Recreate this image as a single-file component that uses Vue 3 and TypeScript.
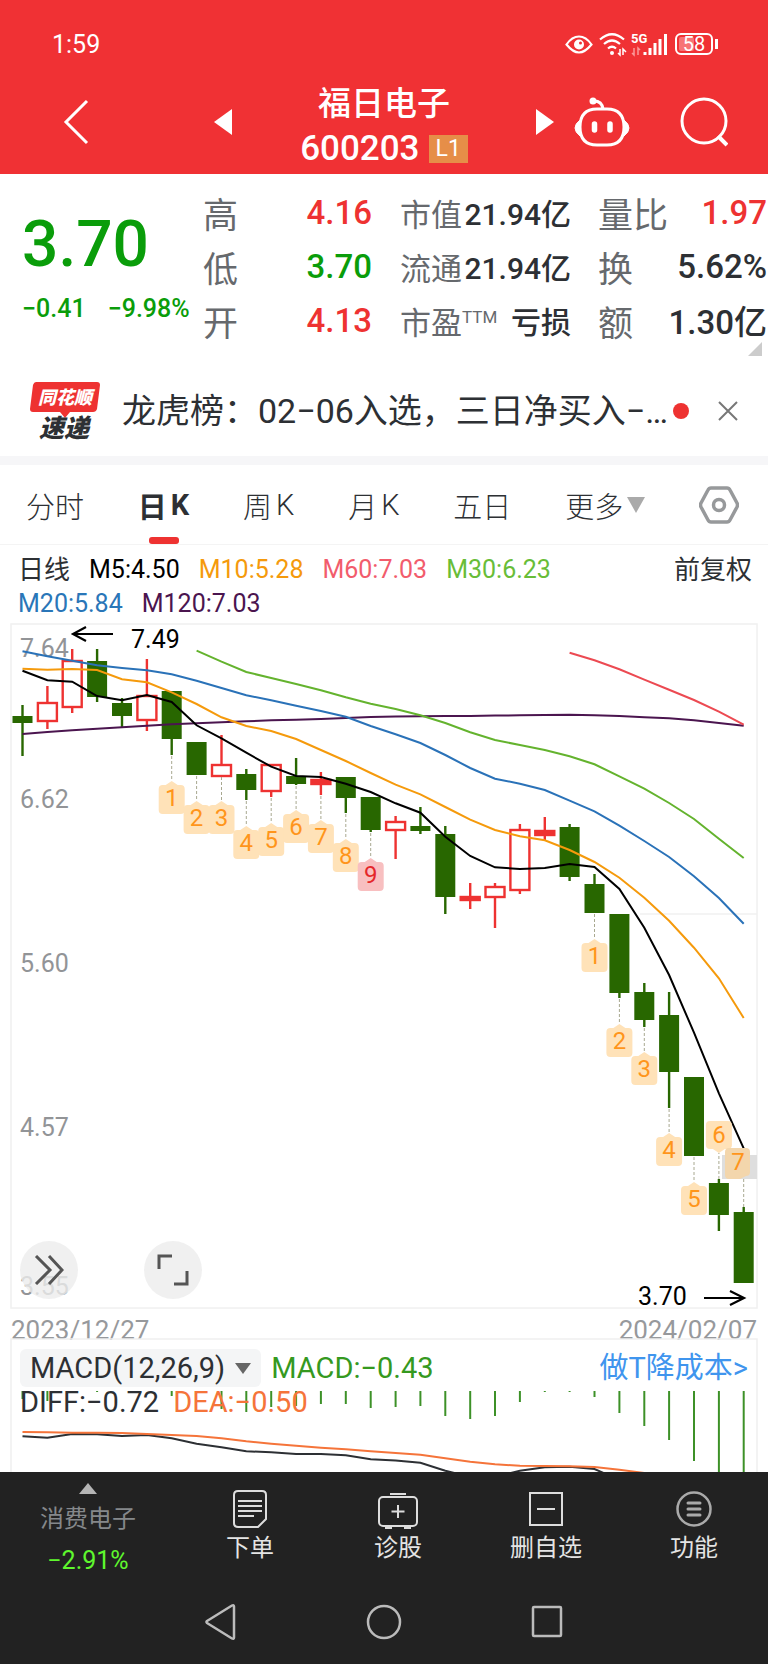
<script setup lang="ts">
interface Candle {
  up: boolean
  high: number
  top: number
  bottom: number
  low: number
}
interface Mark {
  i: number
  n: string
  y: number
}
interface Stat {
  label: string
  sup?: string
  value: string
  tone?: string
}

const STEP = 24.87
const cx = (i: number): number => Math.round((22.5 + STEP * i) * 10) / 10
const line = (values: number[], start = 0): string =>
  values.map((v, k) => `${cx(start + k)},${v}`).join(' ')

const stats: Stat[][] = [
  [
    { label: '高', value: '4.16', tone: 'rise' },
    { label: '低', value: '3.70', tone: 'fall' },
    { label: '开', value: '4.13', tone: 'rise' },
  ],
  [
    { label: '市值', value: '21.94亿' },
    { label: '流通', value: '21.94亿' },
    { label: '市盈', sup: 'TTM', value: '亏损' },
  ],
  [
    { label: '量比', value: '1.97', tone: 'rise' },
    { label: '换', value: '5.62%' },
    { label: '额', value: '1.30亿' },
  ],
]

const tabs: string[][] = [['分时'], ['日', 'K'], ['周', 'K'], ['月', 'K'], ['五日']]

const averages = [
  { text: 'M5:4.50', tone: 'm5' },
  { text: 'M10:5.28', tone: 'm10' },
  { text: 'M60:7.03', tone: 'm60' },
  { text: 'M30:6.23', tone: 'm30' },
  { text: 'M20:5.84', tone: 'm20' },
  { text: 'M120:7.03', tone: 'm120' },
]

const raw: [number, number, number, number, number][] = [
  [0, 85, 96, 103, 136], [1, 66, 82, 101, 109], [1, 29, 40, 87, 93], [0, 29, 41, 77, 82],
  [0, 78, 83, 96, 107], [1, 39, 75, 100, 111], [0, 71, 71, 119, 135], [0, 122, 122, 155, 155],
  [1, 115, 144, 156, 156], [0, 149, 154, 170, 180], [1, 144, 144, 171, 177], [0, 138, 156, 164, 165],
  [1, 152, 159, 164, 175], [0, 157, 157, 178, 193], [0, 177, 177, 210, 212], [1, 196, 201, 210, 239],
  [0, 187, 206, 211, 214], [0, 206, 214, 277, 294], [1, 263, 276, 280, 289], [1, 263, 266, 277, 308],
  [1, 204, 209, 270, 274], [1, 197, 210, 215, 220], [0, 204, 207, 257, 261], [0, 254, 264, 293, 293],
  [0, 294, 294, 373, 378], [0, 363, 372, 400, 407], [0, 372, 395, 452, 488], [0, 457, 457, 536, 536],
  [0, 559, 563, 595, 611], [0, 587, 592, 663, 663],
]
const candles: Candle[] = raw.map(([u, high, top, bottom, low]) => ({ up: u === 1, high, top, bottom, low }))
const isFlat = (c: Candle): boolean => c.bottom - c.top < 6

const lines = [
  { tone: 'm120', points: line([114, 112, 110.3, 108.7, 107.3, 105.7, 104.3, 103.3, 102.3, 101.3, 100.3, 99.7, 99, 98, 97, 96.6, 96.2, 96, 96, 95.5, 95.3, 95.1, 94.7, 95.3, 96, 97.3, 98.3, 100.3, 103, 105.7]) },
  { tone: 'm60', points: line([32.7, 40.3, 49.3, 59.7, 69.7, 80, 91.7, 104.7], 22) },
  { tone: 'm30', points: line([30.7, 41.7, 52, 58, 64, 70.3, 77.3, 83.7, 89, 95.3, 103, 112.3, 120, 125, 130, 136.3, 144.3, 156.3, 168.7, 183, 199, 218.7, 238], 7) },
  { tone: 'm20', points: line([31.3, 36.3, 40.7, 45.3, 48, 50.3, 54.3, 60.7, 68, 75.3, 80.3, 85.7, 91, 96.7, 106, 114.3, 123, 135, 148, 158.7, 163.7, 170, 180.7, 191.3, 205.7, 221, 237, 256.3, 278, 303.7]) },
  { tone: 'm10', points: line([48.7, 49.7, 49, 50, 59.3, 62.3, 72.3, 84, 97.3, 106, 111, 119, 130, 141, 153, 164.7, 174.3, 187, 199.7, 210, 216.3, 220.3, 230, 242, 257.7, 277.7, 300.7, 327.7, 358.3, 398]) },
  { tone: 'm5', points: line([50.7, 60.3, 61.7, 76, 80.3, 75, 82, 105.3, 118.3, 132.7, 146.7, 156, 157, 163.7, 172, 183.3, 192.7, 216.7, 236, 247.3, 249, 248, 244, 247, 269, 307.7, 355, 412.7, 473.3, 528.3]) },
]

const marks: Mark[] = [
  { i: 6, n: '1', y: 161 }, { i: 7, n: '2', y: 181 }, { i: 8, n: '3', y: 181 },
  { i: 9, n: '4', y: 206 }, { i: 10, n: '5', y: 203 }, { i: 11, n: '6', y: 190 },
  { i: 12, n: '7', y: 200 }, { i: 13, n: '8', y: 219 }, { i: 14, n: '9', y: 238 },
  { i: 23, n: '1', y: 319 }, { i: 24, n: '2', y: 404 }, { i: 25, n: '3', y: 432 },
  { i: 26, n: '4', y: 513 }, { i: 27, n: '5', y: 562 },
]

const axis = [
  { v: '7.64', y: 37 }, { v: '6.62', y: 188 }, { v: '5.60', y: 352 },
  { v: '4.57', y: 516 }, { v: '3.55', y: 675 },
]

const bars: number[] = [8, 10, 1, 1, 0, 0, 5, 0, 18, 21, 16, 15, 13, 13, 17, 16, 15, 25, 28, 25, 11, 1, 1, 6, 22, 35, 49, 70, 84, 84]
const diff = line([98.3, 99.7, 96, 96.3, 98, 97, 100.3, 105.7, 109.3, 113.3, 114.3, 116, 116, 117.3, 121.3, 122.6, 124.7, 132.7, 139, 139, 132.7, 129.3, 128.7, 131, 142])
const dea = line([94, 94.3, 94.7, 94.7, 95, 96, 97, 98, 100.3, 103.3, 105.7, 107.7, 109.7, 111.3, 113.3, 115, 116.7, 120.3, 123.7, 126.3, 127.7, 128, 128.3, 129, 131.7, 135, 142])
</script>

<template>
  <div class="app">
    <header class="top">
      <div class="status">
        <span class="clock">1:59</span>
        <svg class="status-icons" width="154" height="26" viewBox="0 0 154 26" fill="none" stroke="#fff" aria-hidden="true">
          <path d="M1.500 13.500Q7 5.500 14 5.500T26.500 13.500Q20 21.500 14 21.500T1.500 13.500Z" stroke-width="2.200" />
          <circle cx="14" cy="13.500" r="5" fill="#fff" stroke="none" />
          <circle cx="15.500" cy="12" r="1.500" fill="#f03134" stroke="none" />
          <path d="M35 8.500Q47 -2 59 8.500M39 13Q47 6 55 13M43 17.500Q47 14 51 17.500" stroke-width="2.200" />
          <circle cx="47" cy="22" r="2" fill="#fff" stroke="none" />
          <path d="M55 18v6l-2-2M58 24v-6l3 3" stroke-width="1.500" />
          <text x="66" y="12" class="net" fill="#fff" stroke="none">5G</text>
          <path d="M69 17v7l-2-2M73 24v-7l2 2" stroke="#fa9a9a" stroke-width="1.500" />
          <path d="M80 24v-3M85 24v-7M90 24v-12M95 24v-16M100.500 24v-21" stroke-width="3" />
          <rect x="111" y="3" width="36" height="20" rx="5" stroke-width="2" />
          <rect x="114" y="6" width="15" height="14" rx="2" fill="#f77476" stroke="none" />
          <text x="129" y="20" text-anchor="middle" class="battery" fill="#fff" stroke="none">58</text>
          <path d="M151.500 8v10" stroke-width="3" />
        </svg>
      </div>
      <div class="titlebar">
        <button class="icon back" aria-label="返回">
          <svg width="26" height="46" viewBox="0 0 26 46" fill="none" stroke="#fff" stroke-width="3"><path d="M24 2L3 23l21 21" /></svg>
        </button>
        <div class="stock">
          <button class="icon" aria-label="上一只">
            <svg width="18" height="26" viewBox="0 0 18 26" fill="#fff"><path d="M18 0v26L0 13z" /></svg>
          </button>
          <div class="names">
            <h1>福日电子</h1>
            <div class="code"><span>600203</span><span class="level">L1</span></div>
          </div>
          <button class="icon" aria-label="下一只">
            <svg width="18" height="26" viewBox="0 0 18 26" fill="#fff"><path d="M0 0v26l18-13z" /></svg>
          </button>
        </div>
        <div class="actions">
          <button class="icon" aria-label="智能助手">
            <svg width="56" height="52" viewBox="0 0 56 52" fill="none" stroke="#fff" stroke-width="3">
              <circle cx="19" cy="5" r="3.500" fill="#fff" stroke="none" />
              <path d="M20 5q8 0 9 8" />
              <path d="M23 13h10q17 0 17 18 0 18-17 18H23Q6 49 6 31 6 13 23 13z" />
              <path d="M6 24q-5 4-5 8t5 8zM50 24q5 4 5 8t-5 8z" fill="#fff" stroke-width="1" />
              <path d="M20.500 28v6M36 28v6" stroke-width="5.500" stroke-linecap="round" />
            </svg>
          </button>
          <button class="icon" aria-label="搜索">
            <svg width="48" height="50" viewBox="0 0 48 50" fill="none" stroke="#fff" stroke-width="3">
              <circle cx="24" cy="24" r="22" /><path d="M38 39l9 9" stroke-width="4" />
            </svg>
          </button>
        </div>
      </div>
    </header>

    <section class="quote">
      <div class="price fall">
        <strong>3.70</strong>
        <p><span>−0.41</span><span>−9.98%</span></p>
      </div>
      <dl v-for="(col, c) in stats" :key="c" :class="'col' + c">
        <div v-for="s in col" :key="s.label">
          <dt>{{ s.label }}<sup v-if="s.sup">{{ s.sup }}</sup></dt>
          <dd :class="s.tone">{{ s.value }}</dd>
        </div>
      </dl>
      <svg class="corner" width="14" height="14" viewBox="0 0 14 14" fill="#ccc" aria-hidden="true"><path d="M14 0v14H0z" /></svg>
    </section>

    <section class="news">
      <svg class="brand" width="70" height="58" viewBox="0 0 70 58">
        <path d="M6 0h61q3 0 3 3l-3 24q-1 3-4 3H40l-5 6-5-6H3q-3 0-3-3L3 3q1-3 3-3z" fill="#ee3231" />
        <text x="35" y="22" font-size="18" fill="#fff">同花顺</text>
        <text x="34" y="55" font-size="25" fill="#2d3034">速递</text>
      </svg>
      <a href="#news">龙虎榜：02−06入选，三日净买入−…</a>
      <i class="dot"></i>
      <button class="icon" aria-label="关闭">
        <svg width="20" height="20" viewBox="0 0 20 20" stroke="#777" stroke-width="2"><path d="M1 1l18 18M19 1L1 19" /></svg>
      </button>
    </section>

    <nav class="tabs">
      <button v-for="t in tabs" :key="t[0]" :class="{ active: t[0] === '日' }"><span v-for="p in t" :key="p">{{ p }}</span></button>
      <button class="more">更多<svg width="18" height="16" viewBox="0 0 18 16" fill="#aaa"><path d="M0 0h18L9 16z" /></svg></button>
      <button aria-label="设置">
        <svg width="40" height="38" viewBox="0 0 40 38" fill="none" stroke="#97999b" stroke-width="3.500" stroke-linejoin="round">
          <path d="M12 2h16q2 0 3 2l7 13q1 2 0 4l-7 13q-1 2-3 2H12q-2 0-3-2L2 21q-1-2 0-4L9 4q1-2 3-2z" /><circle cx="20" cy="19" r="5.500" />
        </svg>
      </button>
    </nav>

    <section class="legend">
      <div class="averages">
        <span class="kind">日线</span>
        <span v-for="a in averages" :key="a.text" :class="a.tone">{{ a.text }}</span>
      </div>
      <button>前复权</button>
    </section>

    <section class="kline">
      <svg class="plot" viewBox="0 0 768 690" role="img" aria-label="日K线图">
        <rect x="11" y="4" width="746" height="684" class="frame" />
        <path d="M640 294h117" class="frame" />
        <text v-for="a in axis" :key="a.v" x="20" :y="a.y" class="axis">{{ a.v }}</text>
        <g v-for="(c, i) in candles" :key="i" :class="[c.up ? 'up' : 'down', { flat: isFlat(c) }]">
          <path :d="`M${cx(i)} ${c.high}V${c.top}M${cx(i)} ${c.bottom}V${c.low}`" />
          <rect v-if="c.up" :x="cx(i) - 9.500" :y="c.top + 1" width="19" :height="c.bottom - c.top - 1" />
          <rect v-else :x="cx(i) - 10" :y="c.top" width="20" :height="c.bottom - c.top" />
        </g>
        <polyline v-for="l in lines" :key="l.tone" :points="l.points" :class="['ma', l.tone]" />
        <g v-for="m in marks" :key="m.i" :class="['mark', { hot: m.n === '9' }]">
          <path class="lead" :d="`M${cx(m.i)} ${candles[m.i].low + 1}V${m.y}`" />
          <path class="tag" :d="`M${cx(m.i)} ${m.y}l6 4h3q4 0 4 4v21q0 4-4 4h-18q-4 0-4-4v-21q0-4 4-4h3z`" />
          <text :x="cx(m.i)" :y="m.y + 25">{{ m.n }}</text>
        </g>
        <rect x="722" y="535" width="35" height="24" fill="#dedede" />
        <g class="mark">
          <path class="lead" d="M718.900 559V533M743.700 587V559" />
          <path class="tag" d="M718.900 533l6-4h3q4 0 4-4v-20q0-4-4-4h-18q-4 0-4 4v20q0 4 4 4h3z" />
          <text x="719" y="523">6</text>
          <path class="tag soft" d="M729 528h17q4 0 4 4v20q0 4-4 4l-6 3h-11q-4 0-4-4v-23q0-4 4-4z" />
          <text x="738" y="550">7</text>
        </g>
        <path class="arrow" d="M113 14H73M86 7L73 14l13 7M704 678h40M730 671l14 7-14 7" />
        <text x="131" y="28" class="note">7.49</text>
        <text x="638" y="685" class="note">3.70</text>
      </svg>
      <div class="tools">
        <button aria-label="展开">
          <svg width="30" height="30" viewBox="0 0 30 30" fill="none" stroke="#555" stroke-width="3"><path d="M2 1l14 14L2 29M15 1l13 14-13 14" /></svg>
        </button>
        <button aria-label="全屏">
          <svg width="32" height="32" viewBox="0 0 32 32" fill="none" stroke="#555" stroke-width="3"><path d="M2 15V2h13M30 17v13H17" /></svg>
        </button>
      </div>
    </section>

    <div class="dates"><time>2023/12/27</time><time>2024/02/07</time></div>

    <section class="macd">
      <svg class="plot" viewBox="0 0 768 134" role="img" aria-label="MACD">
        <path d="M11 134V1h746v133" class="frame" />
        <template v-for="(b, i) in bars" :key="i">
          <path v-if="b" :d="`M${cx(i)} 53v${b}`" class="bar" />
        </template>
        <polyline :points="diff" class="ma diff" />
        <polyline :points="dea" class="ma dea" />
      </svg>
      <div class="readout">
        <div class="line">
          <button class="picker">MACD(12,26,9)<svg width="16" height="11" viewBox="0 0 16 11" fill="#666"><path d="M0 0h16L8 11z" /></svg></button>
          <span class="hist">MACD:−0.43</span>
          <a href="#cost">做T降成本&gt;</a>
        </div>
        <div class="line second"><span>DIFF:−0.72</span><span class="dea-text">DEA:−0.50</span></div>
      </div>
    </section>

    <footer class="bottom">
      <nav class="menu">
        <button class="sector">
          <svg width="18" height="11" viewBox="0 0 18 11" fill="#b5b5b5"><path d="M0 11h18L9 0z" /></svg>
          <span>消费电子</span>
          <b>−2.91%</b>
        </button>
        <button>
          <svg width="42" height="40" viewBox="0 0 42 40" fill="none" stroke="#ddd" stroke-width="2">
            <path d="M9 2h24q4 0 4 4v24l-8 8H9q-4 0-4-4V6q0-4 4-4z" /><path d="M9 12h24M9 17h24M9 22h24M9 27h16" />
          </svg>
          <span>下单</span>
        </button>
        <button>
          <svg width="42" height="40" viewBox="0 0 42 40" fill="none" stroke="#ddd" stroke-width="2">
            <rect x="2" y="8" width="38" height="29" rx="4" /><path d="M13 5h16M21 16v13M14.500 22.500h13" /><path d="M8 38.500h7M27 38.500h7" stroke-width="3" />
          </svg>
          <span>诊股</span>
        </button>
        <button>
          <svg width="42" height="40" viewBox="0 0 42 40" fill="none" stroke="#ddd" stroke-width="2">
            <rect x="5" y="4" width="32" height="32" /><path d="M12 20h18" />
          </svg>
          <span>删自选</span>
        </button>
        <button>
          <svg width="42" height="40" viewBox="0 0 42 40" fill="none" stroke="#aaa" stroke-width="2.500">
            <circle cx="21" cy="20" r="16.500" /><path d="M15 14h12M15 20h12M15 26h12" stroke-width="3" stroke-linecap="round" />
          </svg>
          <span>功能</span>
        </button>
      </nav>
      <nav class="system">
        <button aria-label="后退"><svg width="36" height="40" viewBox="0 0 36 40" fill="none" stroke="#bbb" stroke-width="2.500" stroke-linejoin="round"><path d="M31 4.500v31q0 2-2 1L4 21q-1-1 0-2L29 3.500q2-1 2 1z" /></svg></button>
        <button aria-label="主页"><svg width="36" height="40" viewBox="0 0 36 40" fill="none" stroke="#bbb" stroke-width="2.500"><circle cx="18" cy="20" r="16" /></svg></button>
        <button aria-label="最近任务"><svg width="36" height="40" viewBox="0 0 36 40" fill="none" stroke="#bbb" stroke-width="2.500"><rect x="4" y="5" width="28" height="29" rx="1" /></svg></button>
      </nav>
    </footer>
  </div>
</template>

<style>
body {
  margin: 0;
  background: #fff;
}
</style>

<style scoped>
.app {
  font-family: Roboto, "Noto Sans CJK SC", sans-serif;
  color: #2d3034;
  background: #fff;
  overflow: hidden;
}
button {
  font: inherit;
  color: inherit;
  background: none;
  border: 0;
  padding: 0;
}
a {
  color: inherit;
  text-decoration: none;
}
svg {
  display: block;
}
.rise { color: #ee3231; }
.fall { color: #0a9d0a; }

.top {
  background: #f03134;
  color: #fff;
  height: 174px;
}
.status {
  display: flex;
  align-items: center;
  justify-content: space-between;
  padding: 30px 49px 0 52px;
  height: 28px;
}
.clock {
  font-size: 25px;
}
.net {
  font-size: 13px;
  font-weight: 700;
}
.battery {
  font-size: 20px;
}
.titlebar {
  display: grid;
  grid-template-columns: 1fr 340px 1fr;
  align-items: center;
  height: 108px;
  padding-top: 10px;
}
.back {
  justify-self: start;
  margin-left: 63px;
}
.stock {
  display: flex;
  justify-content: space-between;
  align-items: center;
}
.names {
  display: flex;
  flex-direction: column;
  align-items: center;
  padding-top: 8px;
}
h1 {
  margin: 0;
  font-size: 33px;
  line-height: 46px;
  font-weight: 500;
}
.code {
  display: flex;
  align-items: center;
  gap: 9px;
  font-size: 35px;
  line-height: 44px;
  font-weight: 500;
}
.level {
  background: #e68e48;
  font-size: 23px;
  line-height: 28px;
  padding: 0 7px;
  font-weight: 400;
}
.actions {
  display: flex;
  justify-content: space-between;
  align-items: center;
  padding: 0 40px 0 20px;
}

.quote {
  position: relative;
  display: grid;
  grid-template-columns: 181fr 169fr 199fr 196fr;
  padding: 11px 1px 9px 22px;
  height: 162px;
}
.price strong {
  display: block;
  font-size: 64px;
  line-height: 64px;
  font-weight: 500;
  margin-top: 28px;
}
.price p {
  margin: 16px 0 0;
  display: flex;
  gap: 22px;
  font-size: 25px;
  line-height: 32px;
  font-weight: 500;
  white-space: nowrap;
}
dl {
  margin: 0;
}
dl div {
  display: flex;
  align-items: center;
  justify-content: space-between;
  height: 54px;
  font-size: 33px;
  white-space: nowrap;
}
dt {
  color: #66696d;
}
dd {
  margin: 0;
  font-weight: 500;
}
.col1 {
  padding-left: 28px;
}
.col2 {
  padding-left: 27px;
}
.col0 dt,
.col2 dt {
  font-size: 35px;
}
.col1 dt {
  font-size: 31px;
}
.col1 div {
  font-size: 30px;
}
.col1 sup {
  font-size: 17px;
  line-height: 17px;
}
.corner {
  position: absolute;
  right: 6px;
  bottom: 0;
}

.news {
  display: flex;
  align-items: center;
  height: 90px;
  padding: 10px 30px 0;
  border-bottom: 9px solid #f6f6f8;
}
.brand {
  font-style: italic;
  font-weight: 900;
  text-anchor: middle;
}
.news a {
  margin-left: 22px;
  flex: 1;
  font-size: 34px;
  line-height: 48px;
  white-space: nowrap;
}
.dot {
  width: 16px;
  height: 16px;
  border-radius: 50%;
  background: #ee3231;
  margin-right: 29px;
}

.tabs {
  display: flex;
  justify-content: space-between;
  align-items: stretch;
  height: 79px;
  padding: 0 29px 0 26px;
  font-size: 29px;
  font-weight: 300;
  border-bottom: 1px solid #f4f4f4;
}
.tabs button {
  position: relative;
  display: flex;
  align-items: center;
  gap: 4px;
}
.tabs .active {
  font-weight: 700;
}
.tabs .active::after {
  content: "";
  position: absolute;
  left: 50%;
  bottom: 0;
  width: 30px;
  height: 7px;
  margin-left: -15px;
  border-radius: 3px;
  background: #ee3231;
}

.legend {
  display: flex;
  justify-content: space-between;
  align-items: flex-start;
  padding: 8px 16px 0 18px;
  font-size: 25px;
  line-height: 34px;
  height: 67px;
}
.averages {
  display: flex;
  flex-wrap: wrap;
  column-gap: 19px;
  max-width: 560px;
}
.kind,
.legend button {
  font-size: 26px;
}
.m5 { color: #000; stroke: #000; }
.m10 { color: #f59a0c; stroke: #f59a0c; }
.m20 { color: #2a76b8; stroke: #2a72b8; }
.m30 { color: #68bd38; stroke: #64b32e; }
.m60 { color: #f25c6c; stroke: #ec4a52; }
.m120 { color: #4b154f; stroke: #4b154f; }

.kline {
  position: relative;
}
.plot {
  width: 100%;
  height: auto;
}
.frame {
  fill: none;
  stroke: #f0f0f0;
  stroke-width: 1.5;
}
.axis {
  font-size: 25px;
  fill: #929497;
}
.note {
  font-size: 25px;
  fill: #000;
}
.up,
.down {
  stroke-width: 2.4;
}
.up {
  stroke: #ee3231;
  fill: #fff;
}
.up.flat {
  fill: #ee3231;
}
.down {
  stroke: #286700;
  fill: #286700;
}
.down rect {
  stroke: none;
}
.ma {
  fill: none;
  stroke-width: 2;
}
.lead {
  stroke: #a8a890;
  stroke-width: 1;
  stroke-dasharray: 3 2;
}
.tag {
  fill: #ffe2b8;
}
.soft {
  fill: #f3d6ac;
}
.mark text {
  font-size: 24px;
  text-anchor: middle;
  fill: #ff951b;
}
.hot .tag {
  fill: #f8bfc0;
}
.mark.hot text {
  fill: #e5262a;
}
.arrow {
  fill: none;
  stroke: #000;
  stroke-width: 2.2;
}
.tools {
  position: absolute;
  left: 20px;
  bottom: 11px;
  display: flex;
  gap: 66px;
}
.tools button {
  width: 58px;
  height: 58px;
  border-radius: 50%;
  background: rgba(236, 236, 236, 0.8);
  display: flex;
  align-items: center;
  justify-content: center;
}

.dates {
  display: flex;
  justify-content: space-between;
  padding: 5px 11px 0;
  font-size: 26px;
  line-height: 30px;
  height: 23px;
  color: #97999c;
}

.macd {
  display: grid;
  height: 134px;
  overflow: hidden;
}
.macd .plot,
.readout {
  grid-area: 1 / 1;
}
.bar {
  stroke: #3d9128;
  stroke-width: 2;
}
.diff { stroke: #2d3034; }
.dea { stroke: #f5743a; }
.readout {
  padding: 11px 20px 0;
  font-size: 29px;
}
.line {
  display: flex;
  align-items: center;
  line-height: 38px;
  white-space: nowrap;
}
.picker {
  display: flex;
  align-items: center;
  gap: 10px;
  padding: 0 10px;
  background: #f4f5f6;
  border-radius: 6px;
}
.hist {
  margin-left: 10px;
  color: #35991f;
}
.line a {
  margin-left: auto;
  color: #3f95ee;
}
.second {
  line-height: 30px;
  gap: 14px;
}
.dea-text {
  color: #f5743a;
}

.bottom {
  background: #222;
  color: #e4e4e4;
  height: 192px;
}
.menu {
  display: grid;
  grid-template-columns: 176fr 148fr 148fr 148fr 148fr;
  height: 116px;
  font-size: 24px;
  line-height: 34px;
}
.menu button {
  display: flex;
  flex-direction: column;
  align-items: center;
  padding-top: 17px;
  gap: 2px;
}
.menu .sector {
  padding-top: 11px;
  gap: 8px;
  color: #85888b;
}
.sector b {
  color: #5ff72e;
  font-size: 25px;
  font-weight: 400;
}
.system {
  display: flex;
  justify-content: center;
  gap: 127px;
  padding-top: 14px;
}
</style>
